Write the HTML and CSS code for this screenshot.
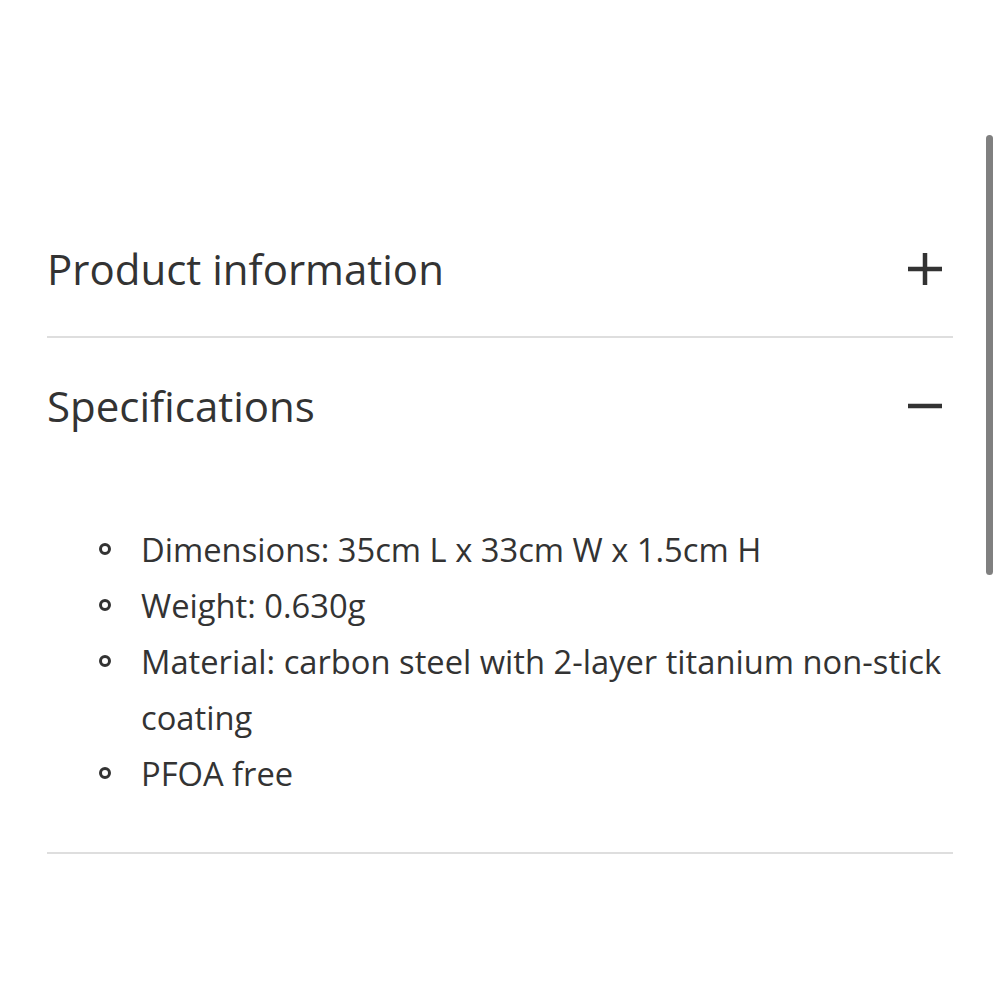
FILE: index.html
```html
<!DOCTYPE html>
<html>
<head>
<meta charset="utf-8">
<link rel="stylesheet" href="styles.css">
</head>
<body>
<div class="accordion">
  <div class="item">
    <div class="header">
      <h2 class="title">Product information</h2>
      <svg class="icon" width="34" height="34" viewBox="0 0 34 34"><line x1="0" y1="17" x2="34" y2="17"/><line x1="17" y1="1" x2="17" y2="33"/></svg>
    </div>
  </div>
  <div class="item">
    <div class="header">
      <h2 class="title">Specifications</h2>
      <svg class="icon" width="34" height="34" viewBox="0 0 34 34"><line x1="0" y1="17" x2="34" y2="17"/></svg>
    </div>
    <ul class="specs">
      <li>Dimensions: 35cm L x 33cm W x 1.5cm H</li>
      <li>Weight: 0.630g</li>
      <li>Material: carbon steel with 2-layer titanium non-stick coating</li>
      <li>PFOA free</li>
    </ul>
  </div>
</div>
<div class="scrollbar"></div>
</body>
</html>
```
FILE: styles.css
```css
html, body {
  margin: 0;
  padding: 0;
  background: #fff;
}
body {
  font-family: "Open Sans", "Liberation Sans", sans-serif;
  color: #333;
}
.accordion {
  padding: 201px 47px 0 47px;
}
.item {
  border-bottom: 2px solid #dedede;
}
.header {
  display: flex;
  align-items: center;
  justify-content: space-between;
  padding: 40px 11px 39px 0;
}
.item + .item .header {
  padding-top: 40px;
}
.title {
  margin: 0;
  font-size: 42px;
  line-height: 56px;
  font-weight: 400;
  color: #333;
}
.icon {
  display: block;
  stroke: #333;
  stroke-width: 4.5;
}
.specs {
  list-style: none;
  margin: 0;
  padding: 49px 0 50px 51px;
  font-size: 32.7px;
  line-height: 56px;
}
.specs li {
  display: grid;
  grid-template-columns: 43px 1fr;
}
.specs li::before {
  content: "";
  width: 6px;
  height: 6px;
  border: 3px solid #333;
  border-radius: 50%;
  margin: 21px 0 0 1px;
}
.scrollbar {
  position: fixed;
  left: 986px;
  top: 135px;
  width: 7px;
  height: 440px;
  border-radius: 4px;
  background: #808080;
}
```
